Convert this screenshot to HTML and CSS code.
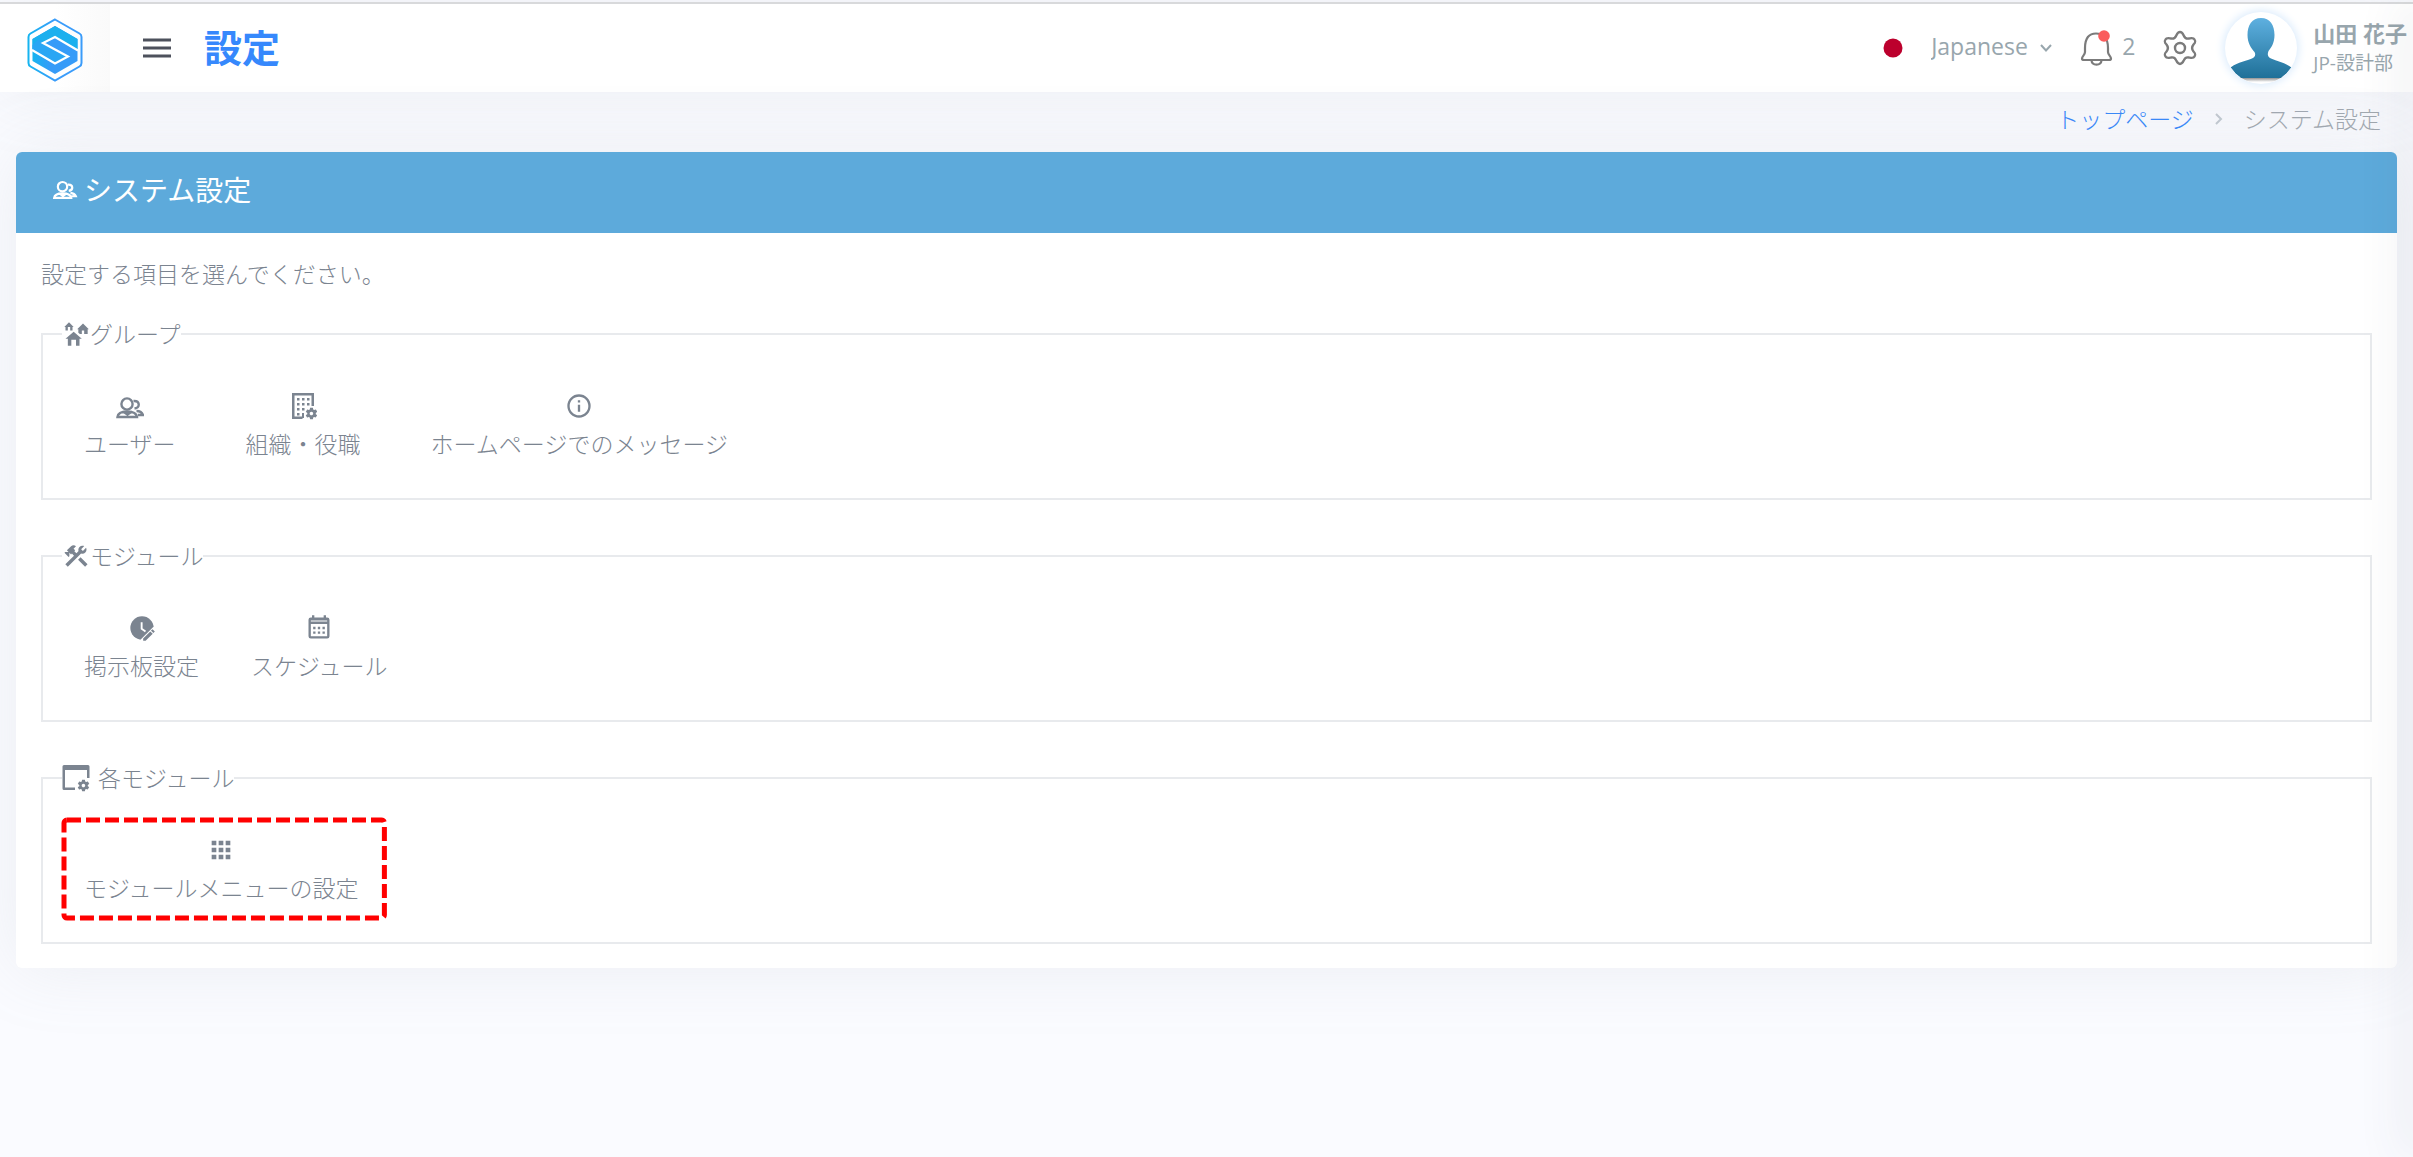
FILE: index.html
```html
<!DOCTYPE html>
<html lang="ja">
  <head>
    <meta charset="UTF-8" />
    <meta name="viewport" content="width=device-width, initial-scale=1.0" />
    <title>設定</title>
    <link rel="stylesheet" href="styles.css">
  </head>
  <body>
    <header class="topbar">
      <a href="#" class="brand" aria-label="Home">
        <svg class="logo" viewBox="0 0 56 64">
          <defs>
            <linearGradient id="logo-line" x1="0" x2="1">
              <stop offset="0" stop-color="#16b4f0" />
              <stop offset=".5" stop-color="#3a9cfa" />
            </linearGradient>
            <linearGradient id="logo-low" x1="0" x2="1">
              <stop offset="0" stop-color="#16b4f0" />
              <stop offset=".4" stop-color="#369bf8" />
            </linearGradient>
          </defs>
          <path d="M28 1.5L52.5 15.5Q54.5 16.7 54.5 19V45Q54.5 47.300 52.5 48.5L28 62.5L3.5 48.5Q1.5 47.300 1.5 45V19Q1.5 16.700 3.5 15.5Z" fill="none" stroke="url(#logo-line)" stroke-width="2" />
          <path d="M28 8L50.500 21V43L28 56L5.500 43V21Z" fill="url(#logo-low)" />
          <path d="M28 8L50.500 21V32L28 19L16 25L5.500 31V21Z" fill="#1cb0ee" />
          <path d="M16 25L41 38.500L28 45.500L5.500 32V27L12 21Z" fill="#2aa6f4" />
          <path d="M51 32.500L28 19L16 25L41 38.500L28 45.500L5 32" fill="none" stroke="#fff" stroke-width="2.200" />
        </svg>
      </a>
      <button class="menu-btn" type="button" aria-label="Menu">
        <svg class="menu-icon" viewBox="0 0 30 22">
          <path d="M1 3H29M1 11H29M1 19H29" stroke="#4d515c" stroke-width="3.200" />
        </svg>
      </button>
      <h1 class="page-title">設定</h1>

      <div class="nav-right">
        <svg class="flag" viewBox="0 0 20 20"><circle cx="10" cy="10" r="9.500" fill="#bc002d" /></svg>
        <select class="lang" aria-label="Language">
          <option>Japanese</option>
        </select>
        <svg class="chevron" viewBox="0 0 12 12"><path d="M1 3L6 8.500L11 3" fill="none" stroke="#98a6ad" stroke-width="2" /></svg>
        <button class="nav-btn bell-btn" type="button" aria-label="Notifications">
          <svg class="nav-icon" viewBox="0 0 34 36" fill="none" stroke="#7b7b7b" stroke-width="2.200" stroke-linejoin="round">
            <path d="M5 18C5 8 9 3.500 16 3.500S28 8 28 18V22C28 25 31 26 31 28.500Q31 30 29 30H4Q2 30 2 28.500C2 26 5 25 5 22Z" />
            <path d="M11.500 30.500C12 36 21 36 21.500 30.500" />
            <circle cx="24" cy="6" r="5.800" fill="#fa5c5c" stroke="none" />
          </svg>
          <span>2</span>
        </button>
        <button class="nav-btn" type="button" aria-label="Settings">
          <svg class="nav-icon" viewBox="0 0 34 36" fill="none" stroke="#7b7b7b" stroke-width="2.400" stroke-linejoin="round">
            <path d="M17 2C19.500 2 20 4 21 6C22 8.300 23.500 9 26 8.500C29 8 30.500 7.500 31.500 9.500C33 12 32 13 30.500 14.500C28.500 17 28.500 19 30.500 21.500C32 23 33 24 31.500 26.500C30.500 28.500 29 28 26 27.500C23.500 27 22 27.700 21 30C20 32 19.500 34 17 34S14 32 13 30C12 27.700 10.500 27 8 27.500C5 28 3.500 28.500 2.500 26.500C1 24 2 23 3.500 21.500C5.500 19 5.500 17 3.500 14.500C2 13 1 12 2.500 9.500C3.500 7.500 5 8 8 8.500C10.500 9 12 8.300 13 6C14 4 14.500 2 17 2Z" />
            <circle cx="17" cy="18" r="5" />
          </svg>
        </button>
        <a href="#" class="user">
          <svg class="avatar" viewBox="0 0 72 72">
            <defs>
              <linearGradient id="person" x1="0" y1="0" x2="0" y2="1">
                <stop offset="0" stop-color="#5eb0e0" />
                <stop offset="1" stop-color="#1f7098" />
              </linearGradient>
              <linearGradient id="ground" x1="0" y1="0" x2="0" y2="1">
                <stop offset="0" stop-color="#777" />
                <stop offset="1" stop-color="#fff" />
              </linearGradient>
              <clipPath id="round"><circle cx="36" cy="36" r="36" /></clipPath>
            </defs>
            <g clip-path="url(#round)">
              <rect x="0" y="65" width="72" height="5" fill="url(#ground)" />
              <path d="M36 6C45 6 49.500 13 49.500 23C49.500 31 46 36 43.500 39C42 43 43 45 46 46.500C54 50 62 51 68 57L72 66H0L4 57C10 51 18 50 27 46.500C30 45 31 43 29.500 40C26 36 22.500 31 22.500 23C22.500 13 27 6 36 6Z" fill="url(#person)" />
            </g>
          </svg>
          <span class="user-text">
            <strong class="user-name">山田 花子</strong>
            <span class="user-dept">JP-設計部</span>
          </span>
        </a>
      </div>
    </header>

    <main class="content">
      <nav class="breadcrumb">
        <a href="#">トップページ</a>
        <svg class="crumb-arrow" viewBox="0 0 10 14"><path d="M2 2L7 7L2 12" fill="none" stroke="#c3cad2" stroke-width="2" /></svg>
        <span>システム設定</span>
      </nav>

      <section class="card">
        <h2 class="card-header">
          <svg class="card-icon" viewBox="0 0 30 24" fill="none" stroke="currentColor" stroke-width="2.600">
            <circle cx="12" cy="8" r="5.600" />
            <path d="M2 21.500C2.500 17.500 6 16 12 16S22 17.500 22.500 21.500ZM8 16L12.500 19L17 16M18.500 5.500C25 5 25.500 12 19.500 13M21.500 15.500C25 16 27 17 28 19.500H23" />
          </svg>
          システム設定
        </h2>
        <div class="card-body">
          <p class="lead">設定する項目を選んでください。</p>

          <fieldset class="group">
            <legend>
              <svg class="icon" viewBox="0 0 24 24"><path d="M17,16H15V22H12V17H8V22H5V16H3L10,10L17,16M6,2L10,6H9V9H7V6H5V9H3V6H2L6,2M18,3L23,8H22V12H19V9H17V12H15.34L14,10.87V8H13L18,3Z" /></svg>グループ
            </legend>
            <div class="items wide">
              <a href="#" class="item">
                <svg class="icon outline" viewBox="0 0 28 28">
                  <circle cx="11" cy="12" r="5.600" />
                  <path d="M1.500 25C2 21 5 19.500 11 19.500S20.500 21 21 25ZM7 19.500L11.500 22.500L16 19.500M17.500 9C24 8.500 24.500 15.500 18.500 16.500M20.500 19C24 19 26 20.500 27 23H22" />
                </svg>
                ユーザー
              </a>
              <a href="#" class="item">
                <svg class="icon" viewBox="0 0 28 28">
                  <path d="M3 1H25V14H22.500V3.500H5.500V24.500H13.500V27H3Z" />
                  <path d="M8 6h2.500v2.500h-2.500zM13 6h2.500v2.500h-2.500zM18 6h2.500v2.500h-2.500zM8 11h2.500v2.500h-2.500zM13 11h2.500v2.500h-2.500zM18 11h2.500v2.500h-2.500zM8 16h2.500v2.500h-2.500zM13 16h2.500v2.500h-2.500zM8 21h2.500v2.500h-2.500zM13 21h2v5h-2z" />
                  <path transform="translate(0 -1) scale(1.180)" d="M23.800 20.400C23.900 20.400 23.900 20.500 23.800 20.600L22.800 22.300C22.700 22.400 22.600 22.400 22.500 22.400L21.300 22C21 22.200 20.800 22.300 20.500 22.500L20.300 23.800C20.300 23.900 20.200 24 20.100 24H18.100C18 24 17.900 23.900 17.800 23.800L17.600 22.500C17.300 22.400 17 22.200 16.800 22L15.600 22.500C15.500 22.500 15.400 22.500 15.300 22.400L14.300 20.700C14.200 20.600 14.300 20.500 14.400 20.400L15.500 19.600V18.600L14.400 17.800C14.300 17.700 14.300 17.600 14.300 17.500L15.300 15.800C15.400 15.700 15.500 15.700 15.600 15.700L16.800 16.200C17.100 16 17.300 15.900 17.600 15.700L17.800 14.400C17.800 14.300 17.900 14.200 18.100 14.200H20.100C20.200 14.200 20.300 14.300 20.300 14.400L20.500 15.700C20.800 15.800 21.100 16 21.400 16.200L22.600 15.700C22.700 15.700 22.900 15.700 22.900 15.800L23.900 17.500C24 17.600 23.900 17.700 23.800 17.800L22.700 18.600V19.600L23.800 20.400M20.500 19C20.500 18.200 19.800 17.500 19 17.500S17.500 18.200 17.500 19 18.200 20.500 19 20.500 20.500 19.800 20.500 19Z" />
                </svg>
                組織・役職
              </a>
              <a href="#" class="item">
                <svg class="icon" viewBox="0 0 24 24"><path d="M11,9H13V7H11M12,20C7.59,20 4,16.41 4,12C4,7.59 7.59,4 12,4C16.41,4 20,7.59 20,12C20,16.41 16.41,20 12,20M12,2A10,10 0 0,0 2,12A10,10 0 0,0 12,22A10,10 0 0,0 22,12A10,10 0 0,0 12,2M11,17H13V11H11V17Z" /></svg>
                ホームページでのメッセージ
              </a>
            </div>
          </fieldset>

          <fieldset class="group">
            <legend>
              <svg class="icon" viewBox="0 0 24 24"><path d="M13.780 15.300L19.780 21.300L21.890 19.140L15.890 13.140L13.780 15.300M17.500 10.100C17.110 10.100 16.690 10.050 16.360 9.910L4.970 21.250L2.860 19.140L10.270 11.740L8.500 9.960L7.780 10.660L6.330 9.250V12.110L5.630 12.810L2.110 9.250L2.810 8.550H5.620L4.220 7.140L7.780 3.580C8.950 2.410 10.830 2.410 12 3.580L9.890 5.740L11.300 7.140L10.590 7.850L12.380 9.630L14.200 7.750C14.060 7.420 14 7 14 6.630C14 4.660 15.560 3.110 17.500 3.110C18.090 3.110 18.610 3.250 19.080 3.530L16.410 6.200L17.910 7.700L20.580 5.030C20.860 5.500 21 6 21 6.630C21 8.550 19.450 10.100 17.500 10.100Z" /></svg>モジュール
            </legend>
            <div class="items">
              <a href="#" class="item">
                <svg class="icon" viewBox="0 0 24 24">
                  <circle cx="12" cy="12" r="10" />
                  <path d="M11.700 7V12.700L15 15" fill="none" stroke="#fff" stroke-width="1.600" />
                  <path d="M13 24L24 13" stroke="#fff" stroke-width="6" />
                  <path d="M13 20.900L19.100 14.900L21.200 16.900L15.100 23H13ZM19.700 14.200L21 13L23 15L21.700 16.300Z" />
                </svg>
                掲示板設定
              </a>
              <a href="#" class="item">
                <svg class="icon" viewBox="0 0 24 24"><path fill-rule="evenodd" d="M6 1H8V3H16V1H18V3H19A2 2 0 0 1 21 5V19A2 2 0 0 1 19 21H5A2 2 0 0 1 3 19V5A2 2 0 0 1 5 3H6ZM5 5.500V6.500H19V5.500ZM5 8.500V19H19V8.500ZM7 11H9V13H7ZM11 11H13V13H11ZM15 11H17V13H15ZM7 15H9V17H7ZM11 15H13V17H11ZM15 15H17V17H15Z" /></svg>
                スケジュール
              </a>
            </div>
          </fieldset>

          <fieldset class="group">
            <legend class="spaced">
              <svg class="icon" viewBox="0 0 28 28">
                <path d="M2 1H26Q27.500 1 27.500 2.500V14H25V6H3V23.500H13V26H2Q.500 26 .500 24.500V2.500Q.500 1 2 1Z" />
                <path transform="translate(-1 -1) scale(1.180)" d="M23.800 20.400C23.900 20.400 23.900 20.500 23.800 20.600L22.800 22.300C22.700 22.400 22.600 22.400 22.500 22.400L21.300 22C21 22.200 20.800 22.300 20.500 22.500L20.300 23.800C20.300 23.900 20.200 24 20.100 24H18.100C18 24 17.900 23.900 17.800 23.800L17.600 22.500C17.300 22.400 17 22.200 16.800 22L15.600 22.500C15.500 22.500 15.400 22.500 15.300 22.400L14.300 20.700C14.200 20.600 14.300 20.500 14.400 20.400L15.500 19.600V18.600L14.400 17.800C14.300 17.700 14.300 17.600 14.300 17.500L15.300 15.800C15.400 15.700 15.500 15.700 15.600 15.700L16.800 16.200C17.100 16 17.300 15.900 17.600 15.700L17.800 14.400C17.800 14.300 17.900 14.200 18.100 14.200H20.100C20.200 14.200 20.300 14.300 20.300 14.400L20.500 15.700C20.800 15.800 21.100 16 21.400 16.200L22.600 15.700C22.700 15.700 22.900 15.700 22.900 15.800L23.900 17.500C24 17.600 23.900 17.700 23.800 17.800L22.700 18.600V19.600L23.800 20.400M20.500 19C20.500 18.200 19.800 17.500 19 17.500S17.500 18.200 17.500 19 18.200 20.500 19 20.500 20.500 19.800 20.500 19Z" />
              </svg>各モジュール
            </legend>
            <div class="items">
              <a href="#" class="item">
                <svg class="icon" viewBox="0 0 24 24"><path d="M16,20H20V16H16M16,14H20V10H16M10,8H14V4H10M16,8H20V4H16M10,14H14V10H10M4,14H8V10H4M4,20H8V16H4M10,20H14V16H10M4,8H8V4H4V8Z" /></svg>
                モジュールメニューの設定
                <!-- red marker round the item -->
                <svg class="marker"><rect width="100%" height="100%" rx="3" /></svg>
              </a>
            </div>
          </fieldset>
        </div>
      </section>
    </main>
  </body>
</html>
```
FILE: styles.css
```css
*, *:before, *:after {
  box-sizing: border-box;
}
body {
  margin: 0;
  min-height: 100vh;
  padding-top: 2px;
  background-color: #fafbff;
  color: #7b8490;
  font-family: "Open Sans", "Noto Sans CJK JP", sans-serif;
  font-size: 23px;
  font-weight: 300;
  line-height: 32px;
  overflow-x: hidden;
}
/* shade along the right edge of the window */
body:after {
  content: "";
  position: fixed;
  top: 4px;
  bottom: 0;
  left: 100%;
  width: 10px;
  box-shadow: 0 0 50px 4px rgba(60, 65, 85, .14);
  pointer-events: none;
}
a {
  color: inherit;
  text-decoration: none;
}
button {
  padding: 0;
  border: 0;
  background: none;
  font: inherit;
  color: inherit;
  cursor: pointer;
}
svg {
  display: block;
}

.topbar {
  position: relative;
  display: flex;
  align-items: center;
  height: 90px;
  border-top: 2px solid #d8d9db;
  background-color: #fff;
  box-shadow: 0 0 70px 0 rgba(154, 161, 171, .15);
}
.brand {
  display: flex;
  align-items: center;
  align-self: stretch;
  width: 110px;
  padding: 4px 0 0 27px;
  background: linear-gradient(to right, #fff 50%, #fafafa);
}
.logo {
  width: 56px;
  height: 64px;
}
.menu-btn {
  margin-left: 32px;
}
.menu-icon {
  width: 30px;
  height: 22px;
}
.page-title {
  margin: 0 0 0 32px;
  padding-bottom: 2px;
  color: #3688fc;
  font-size: 38px;
  font-weight: 700;
  line-height: 48px;
}

.nav-right {
  display: flex;
  align-items: center;
  margin-left: auto;
  padding-right: 6px;
  color: #98a6ad;
}
.flag {
  width: 20px;
  height: 20px;
  margin-right: 28px;
}
.lang {
  appearance: none;
  padding: 0 0 4px;
  border: 0;
  background: none;
  color: inherit;
  font-family: "Open Sans", sans-serif;
  font-size: 23px;
  font-weight: 400;
}
.chevron {
  width: 12px;
  height: 12px;
  margin: 0 28px 0 12px;
}
.nav-btn {
  display: flex;
  align-items: center;
  gap: 8px;
  margin-right: 28px;
}
.bell-btn {
  font-weight: 400;
}
.bell-btn span {
  padding-bottom: 4px;
}
.nav-icon {
  width: 34px;
  height: 36px;
}
.user {
  display: flex;
  align-items: center;
  gap: 16px;
}
.avatar {
  width: 72px;
  height: 72px;
  border-radius: 50%;
  background-color: #fff;
  box-shadow: 0 0 8px 2px #dcecfc;
}
.user-text {
  display: flex;
  flex-direction: column;
}
.user-name {
  font-size: 22px;
  font-weight: 700;
  line-height: 30px;
}
.user-dept {
  font-size: 19px;
  font-weight: 400;
  line-height: 30px;
}

.content {
  padding: 11px 16px 0;
}
.breadcrumb {
  display: flex;
  align-items: center;
  justify-content: flex-end;
  gap: 20px;
  padding: 0 16px 17px;
  color: #a2a9b1;
}
.breadcrumb a {
  color: #3688fc;
}
.crumb-arrow {
  width: 10px;
  height: 14px;
}

.card {
  position: relative;
  border-radius: 6px;
  background-color: #fff;
  box-shadow: 0 0 70px 0 rgba(154, 161, 171, .15);
}
.card-header {
  display: flex;
  align-items: center;
  gap: 6px;
  margin: 0;
  padding: 18px 36px 23px;
  border-radius: 6px 6px 0 0;
  background-color: #5daadb;
  color: #fff;
  font-size: 28px;
  font-weight: 400;
  line-height: 40px;
}
.card-icon {
  width: 26px;
  height: 20px;
}
.card-body {
  padding: 25px 25px 24px;
}
.lead {
  margin: 0 0 28px;
}

.group {
  min-width: 0;
  margin: 0 0 40px;
  padding: 24px 19px 22px;
  border: 2px solid #e8eaed;
}
.group:last-child {
  margin-bottom: 0;
}
.group legend {
  display: flex;
  align-items: center;
  padding: 0;
}
.group .spaced {
  gap: 8px;
}
.icon {
  width: 28px;
  height: 28px;
  fill: currentColor;
}
.outline {
  fill: none;
  stroke: currentColor;
  stroke-width: 2.4px;
}
.items {
  display: flex;
  gap: 2px;
}
.items.wide {
  gap: 20px;
}
.item {
  position: relative;
  display: flex;
  flex-direction: column;
  align-items: center;
  gap: 8px;
  padding: 18px 28px 16px 22px;
}
.marker {
  position: absolute;
  inset: 2px;
  width: calc(100% - 4px);
  height: calc(100% - 4px);
  overflow: visible;
  fill: none;
  stroke: #f00;
  stroke-width: 5px;
  stroke-dasharray: 14 5;
}
```
